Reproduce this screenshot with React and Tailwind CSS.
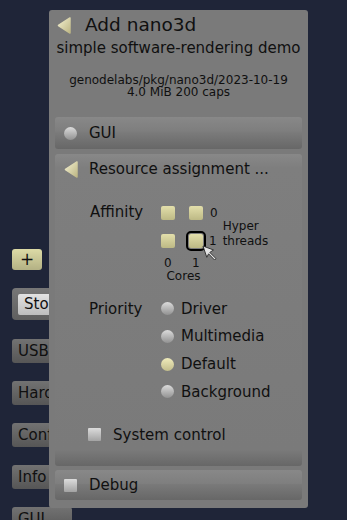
import React from 'react';

const Triangle = () => (
  <svg width="14" height="17" viewBox="0 0 14 17">
    <defs>
      <linearGradient id="tri" x1="0" y1="0" x2="1" y2="1">
        <stop offset="0%" stopColor="#f2efcf" />
        <stop offset="100%" stopColor="#bdb684" />
      </linearGradient>
    </defs>
    <polygon points="13,1 13,16 1.5,8.5" fill="url(#tri)" stroke="url(#tri)" strokeWidth="1.5" strokeLinejoin="round" />
  </svg>
);

const Radio = ({ on }) => (
  <div
    className={`w-[13px] h-[13px] rounded-full shrink-0 ${
      on ? 'bg-gradient-to-b from-[#efebbb] to-[#c2bd8c]' : 'bg-gradient-to-b from-[#dcdcdc] to-[#929292]'
    }`}
  />
);

const Check = () => (
  <div className="w-[13px] h-[13px] rounded-[1px] shrink-0 bg-gradient-to-b from-[#dcdcdc] to-[#a3a3a3]" />
);

const Cell = ({ selected }) => (
  <div
    className={`w-[14px] h-[14px] rounded-[2px] bg-gradient-to-b from-[#e3dfab] to-[#bdb985] ${
      selected ? 'outline-2 outline-black outline-offset-[1px]' : ''
    }`}
  />
);

const section =
  'rounded-[3px] bg-[linear-gradient(to_bottom,#888888_0px,#7e7e7e_14px,#7a7a7a_calc(100%_-_16px),#676767_100%)]';

const SideButton = ({ label }) => (
  <div className="mt-[18px] h-6 w-[60px] rounded-[3px] bg-gradient-to-b from-[#727272] to-[#565656] pl-[6px] flex items-center text-[15px] text-[#101010]">
    {label}
  </div>
);

const App = () => {
  const priorities = ['Driver', 'Multimedia', 'Default', 'Background'];

  return (
    <div className="relative w-[347px] h-[520px] overflow-hidden bg-[#1f2538] font-['DejaVu_Sans',sans-serif] text-[#101010]">
      {/* sidebar behind the dialog */}
      <div className="flex flex-col pt-[249px] pl-[12px]">
        <div className="h-[21px] w-[30px] rounded-[3px] bg-gradient-to-b from-[#dddba6] to-[#b3b184] flex items-center justify-center text-[17px] leading-none">
          +
        </div>
        <div className="mt-[18px] h-[32px] w-[60px] rounded-[4px] bg-gradient-to-b from-[#777777] to-[#5f5f5f] pt-[6px] pl-[6px]">
          <div className="h-[21px] rounded-[2px] bg-gradient-to-b from-[#e2e2e2] to-[#bdbdbd] pl-[6px] flex items-center text-[15px]">
            Storage
          </div>
        </div>
        <div className="mt-[19px] h-6 w-[60px] rounded-[3px] bg-gradient-to-b from-[#727272] to-[#565656] pl-[6px] flex items-center text-[15px]">
          USB
        </div>
        <SideButton label="Hardware" />
        <SideButton label="Config" />
        <SideButton label="Info" />
        <SideButton label="GUI" />
      </div>

      {/* dialog */}
      <div className="absolute left-[49px] top-[10px] w-[259px] h-[498px] rounded-[3px] bg-[#7a7a7a] px-[6px] pt-[4px] flex flex-col">
        <div className="flex items-center h-[22px] pl-[2px]">
          <Triangle />
          <span className="ml-[14px] text-[18.5px] leading-[22px]">Add nano3d</span>
        </div>
        <div className="mt-[3px] text-center text-[15px] leading-[18px]">simple software-rendering demo</div>
        <div className="mt-[17px] text-center text-[12px] leading-[12px]">
          <div>genodelabs/pkg/nano3d/2023-10-19</div>
          <div>4.0 MiB 200 caps</div>
        </div>

        <div className={`mt-[19px] h-[32px] flex items-center pl-[9px] pt-[1px] ${section}`}>
          <Radio />
          <span className="ml-[12px] text-[15px]">GUI</span>
        </div>

        <div className={`mt-[5px] h-[312px] flex flex-col ${section}`}>
          <div className="h-[30px] flex items-center pl-[9px]">
            <Triangle />
            <span className="ml-[11px] text-[15px]">Resource assignment ...</span>
          </div>

          <div className="relative mt-[21px] flex pl-[35px]">
            <div className="w-[71px] text-[15px] leading-[14px]">Affinity</div>
            <div className="flex flex-col">
              <div className="flex items-center">
                <div className="grid grid-cols-[28px_21px_auto] grid-rows-[14px_14px] gap-y-[14px] items-center text-[12px] leading-[14px]">
                  <Cell />
                  <Cell />
                  <span>0</span>
                  <Cell />
                  <Cell selected />
                  <span className="-ml-px">1</span>
                </div>
                <div className="ml-[5px] mt-[14px] text-[12px] leading-[15px]">
                  <div>Hyper</div>
                  <div>threads</div>
                </div>
              </div>
              <div className="w-[42px] text-[12px] leading-[14px] mt-[7px]">
                <div className="flex">
                  <span className="w-[28px] pl-[3px]">0</span>
                  <span className="pl-[3px]">1</span>
                </div>
                <div className="text-center pl-[3px] w-[42px] -mt-px">Cores</div>
              </div>
            </div>
            {/* mouse pointer */}
            <svg className="absolute left-[147px] top-[40px]" width="16" height="17" viewBox="0 0 16 17">
              <polygon
                points="1,1 11.5,5 7.8,7.4 14,13.6 12.6,15 6.6,8.8 4.8,12.3"
                fill="#e4e4e4"
                stroke="#2a2a2a"
                strokeWidth="0.9"
                strokeLinejoin="round"
              />
            </svg>
          </div>

          <div className="mt-[12px] flex pl-[34px]">
            <div className="w-[72px] h-[27.7px] flex items-center text-[15px]">Priority</div>
            <div className="flex flex-col">
              {priorities.map((p) => (
                <div key={p} className="h-[27.7px] flex items-center">
                  <Radio on={p === 'Default'} />
                  <span className="ml-[7px] text-[15px]">{p}</span>
                </div>
              ))}
            </div>
          </div>

          <div className="mt-[15px] h-7 flex items-center pl-[33px]">
            <Check />
            <span className="ml-[12px] text-[15px]">System control</span>
          </div>
        </div>

        <div className={`mt-[4px] h-[30px] flex items-center pl-[9px] ${section}`}>
          <Check />
          <span className="ml-[12px] text-[15px]">Debug</span>
        </div>
      </div>
    </div>
  );
};

export default App;
